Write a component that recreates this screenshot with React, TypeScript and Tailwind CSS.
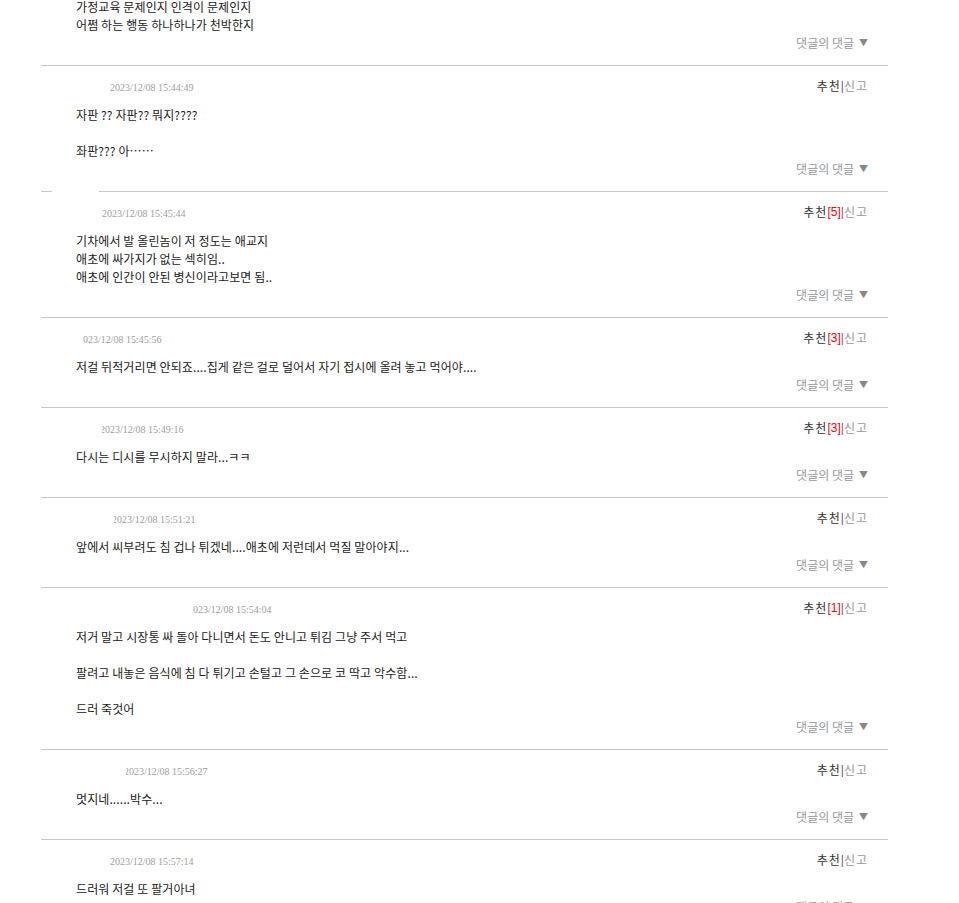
import React from "react";

type Row = {
  wrap: string;
  shift: string;
  date: string;
  rec: string | null;
  body: string[];
  gap: boolean;
};

const rows: Row[] = [
  { wrap: "ml-[69px]", shift: "ml-0", date: "2023/12/08 15:44:49", rec: null, body: ["자판 ?? 자판?? 뭐지????", "", "좌판??? 아……"], gap: false },
  { wrap: "ml-[61px]", shift: "ml-0", date: "2023/12/08 15:45:44", rec: "5", body: ["기차에서 발 올린놈이 저 정도는 애교지", "애초에 싸가지가 없는 섹히임..", "애초에 인간이 안된 병신이라고보면 됨.."], gap: true },
  { wrap: "ml-[42px]", shift: "-ml-[5px]", date: "2023/12/08 15:45:56", rec: "3", body: ["저걸 뒤적거리면 안되죠....집게 같은 걸로 덜어서 자기 접시에 올려 놓고 먹어야...."], gap: false },
  { wrap: "ml-[61px]", shift: "-ml-[2px]", date: "2023/12/08 15:49:16", rec: "3", body: ["다시는 디시를 무시하지 말라...ㅋㅋ"], gap: false },
  { wrap: "ml-[73px]", shift: "-ml-[2px]", date: "2023/12/08 15:51:21", rec: null, body: ["앞에서 씨부려도 침 겁나 튀겠네....애초에 저런데서 먹질 말아야지..."], gap: false },
  { wrap: "ml-[152px]", shift: "-ml-[5px]", date: "2023/12/08 15:54:04", rec: "1", body: ["저거 말고 시장통 싸 돌아 다니면서 돈도 안니고 튀김 그냥 주서 먹고", "", "팔려고 내놓은 음식에 침 다 튀기고 손털고 그 손으로 코 딱고 악수함...", "", "드러 죽것어"], gap: false },
  { wrap: "ml-[85px]", shift: "-ml-[2px]", date: "2023/12/08 15:56:27", rec: null, body: ["멋지네......박수..."], gap: false },
  { wrap: "ml-[69px]", shift: "ml-0", date: "2023/12/08 15:57:14", rec: null, body: ["드러워 저걸 또 팔거아녀"], gap: false },
];

const kr = { fontFamily: '"Noto Sans CJK KR", "Noto Sans", sans-serif' };

function Reply() {
  return (
    <div className="h-[18px] leading-[18px] flex items-center justify-end pr-[20px] text-[12px] text-[#999]" style={kr}>
      <span>댓글의 댓글</span>
      <span className="ml-[5px] text-[9px] text-[#888]">▼</span>
    </div>
  );
}

function Line({ gap }: { gap: boolean }) {
  if (gap) {
    return (
      <div className="flex h-px">
        <div className="w-[11px] bg-[#c8c8c8]" />
        <div className="w-[47px]" />
        <div className="flex-1 bg-[#c8c8c8]" />
      </div>
    );
  }
  return <div className="h-px bg-[#c8c8c8]" />;
}

export default function App() {
  return (
    <div className="w-[959px] h-[903px] overflow-hidden bg-white">
      <div className="ml-[41px] w-[847px]">
        <div className="-mt-[2px] pb-[13px]">
          <div className="pl-[35px] text-[12px] leading-[18px] text-[#222] tracking-[0.1px]" style={kr}>
            <div>가정교육 문제인지 인격이 문제인지</div>
            <div>어쩜 하는 행동 하나하나가 천박한지</div>
          </div>
          <Reply />
        </div>
        {rows.map((r, i) => (
          <div key={i}>
            <Line gap={r.gap} />
            <div className="h-[40px] flex items-center justify-between">
              <div className={`${r.wrap} overflow-hidden mt-[3px]`}>
                <span
                  className={`${r.shift} block whitespace-nowrap text-[10px] leading-[12px] text-[#a0a0a0]`}
                  style={{ fontFamily: '"Liberation Serif", serif' }}
                >
                  {r.date}
                </span>
              </div>
              <div className="pr-[20px] text-[12px] leading-[18px] flex items-center tracking-[1px]" style={kr}>
                <span className="text-[#333]">추천</span>
                {r.rec && (
                  <span className="text-[#ff0000] tracking-normal" style={{ fontFamily: '"Liberation Sans", sans-serif' }}>
                    [{r.rec}]
                  </span>
                )}
                <span className="text-[#7a4f7e] tracking-normal" style={{ fontFamily: '"Liberation Sans", sans-serif' }}>|</span>
                <span className="text-[#9a9a9a]">신고</span>
              </div>
            </div>
            <div className="pl-[35px] text-[12px] leading-[18px] text-[#222] tracking-[0.1px]" style={kr}>
              {r.body.map((t, j) => (
                <div key={j} className="h-[18px] whitespace-nowrap">
                  {t}
                </div>
              ))}
            </div>
            <div className="pb-[13px]">
              <Reply />
            </div>
          </div>
        ))}
      </div>
    </div>
  );
}
